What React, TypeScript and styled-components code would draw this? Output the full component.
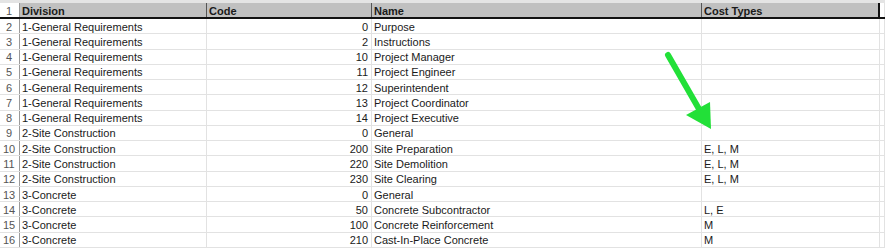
import React from "react";
import styled, { createGlobalStyle } from "styled-components";

interface IRow {
  division: string;
  code: number;
  name: string;
  costTypes: string;
}

const rows: IRow[] = [
  { division: "1-General Requirements", code: 0, name: "Purpose", costTypes: "" },
  { division: "1-General Requirements", code: 2, name: "Instructions", costTypes: "" },
  { division: "1-General Requirements", code: 10, name: "Project Manager", costTypes: "" },
  { division: "1-General Requirements", code: 11, name: "Project Engineer", costTypes: "" },
  { division: "1-General Requirements", code: 12, name: "Superintendent", costTypes: "" },
  { division: "1-General Requirements", code: 13, name: "Project Coordinator", costTypes: "" },
  { division: "1-General Requirements", code: 14, name: "Project Executive", costTypes: "" },
  { division: "2-Site Construction", code: 0, name: "General", costTypes: "" },
  { division: "2-Site Construction", code: 200, name: "Site Preparation", costTypes: "E, L, M" },
  { division: "2-Site Construction", code: 220, name: "Site Demolition", costTypes: "E, L, M" },
  { division: "2-Site Construction", code: 230, name: "Site Clearing", costTypes: "E, L, M" },
  { division: "3-Concrete", code: 0, name: "General", costTypes: "" },
  { division: "3-Concrete", code: 50, name: "Concrete Subcontractor", costTypes: "L, E" },
  { division: "3-Concrete", code: 100, name: "Concrete Reinforcement", costTypes: "M" },
  { division: "3-Concrete", code: 210, name: "Cast-In-Place Concrete", costTypes: "M" },
];

const GlobalStyle = createGlobalStyle`
  html, body {
    margin: 0;
    padding: 0;
    background: #fff;
    overflow: hidden;
  }
`;

const Sheet = styled.div`
  position: relative;
  width: 885px;
  height: 248px;
  overflow: hidden;
  font-family: "Liberation Sans", Arial, sans-serif;
  font-size: 11px;
  color: #1a1a1a;
  background: #fff;
`;

const TopStrip = styled.div`
  height: 3px;
  background: #e4e4e4;
`;

const Row = styled.div<{ $header?: boolean }>`
  display: grid;
  grid-template-columns: 20px 187px 165px 330px 178px 5px;
  height: ${(p) => (p.$header ? "16px" : "15.27px")};
  box-sizing: border-box;
  border-bottom: ${(p) => (p.$header ? "2px solid #111" : "1px solid #e2e2e2")};
`;

const RowNum = styled.div`
  display: flex;
  align-items: center;
  justify-content: center;
  color: #555;
  background: #fff;
  border-right: 1px solid #9a9a9a;
  padding: 1px 1px 0 0;
`;

const Cell = styled.div<{ $header?: boolean; $right?: boolean; $last?: boolean }>`
  display: flex;
  align-items: center;
  justify-content: ${(p) => (p.$right ? "flex-end" : "flex-start")};
  padding: 1px 3px 0 2px;
  white-space: nowrap;
  overflow: hidden;
  background: ${(p) => (p.$header ? "#c0c0c0" : "#fff")};
  font-weight: ${(p) => (p.$header ? 700 : 400)};
  border-right: ${(p) =>
    p.$last && p.$header ? "2px solid #111" : p.$header ? "1px solid #555" : "1px solid #e2e2e2"};
`;

const Filler = styled.div`
  border-right: 1px solid #e2e2e2;
`;

const Arrow = styled.svg`
  position: absolute;
  left: 0;
  top: 0;
  pointer-events: none;
`;

const App: React.FC = () => {
  return (
    <>
      <GlobalStyle />
      <Sheet>
        <TopStrip />
        <Row $header>
          <RowNum>1</RowNum>
          <Cell $header>Division</Cell>
          <Cell $header>Code</Cell>
          <Cell $header>Name</Cell>
          <Cell $header $last>
            Cost Types
          </Cell>
          <Filler />
        </Row>
        {rows.map((r, i) => (
          <Row key={i}>
            <RowNum>{i + 2}</RowNum>
            <Cell>{r.division}</Cell>
            <Cell $right>{r.code}</Cell>
            <Cell>{r.name}</Cell>
            <Cell>{r.costTypes}</Cell>
            <Filler />
          </Row>
        ))}
        <Arrow width="885" height="248">
          <line
            x1="668"
            y1="55"
            x2="699"
            y2="109"
            stroke="#22e038"
            strokeWidth="6"
            strokeLinecap="round"
          />
          <polygon points="686,115 710,102 711,129" fill="#22e038" />
        </Arrow>
      </Sheet>
    </>
  );
};

export default App;
